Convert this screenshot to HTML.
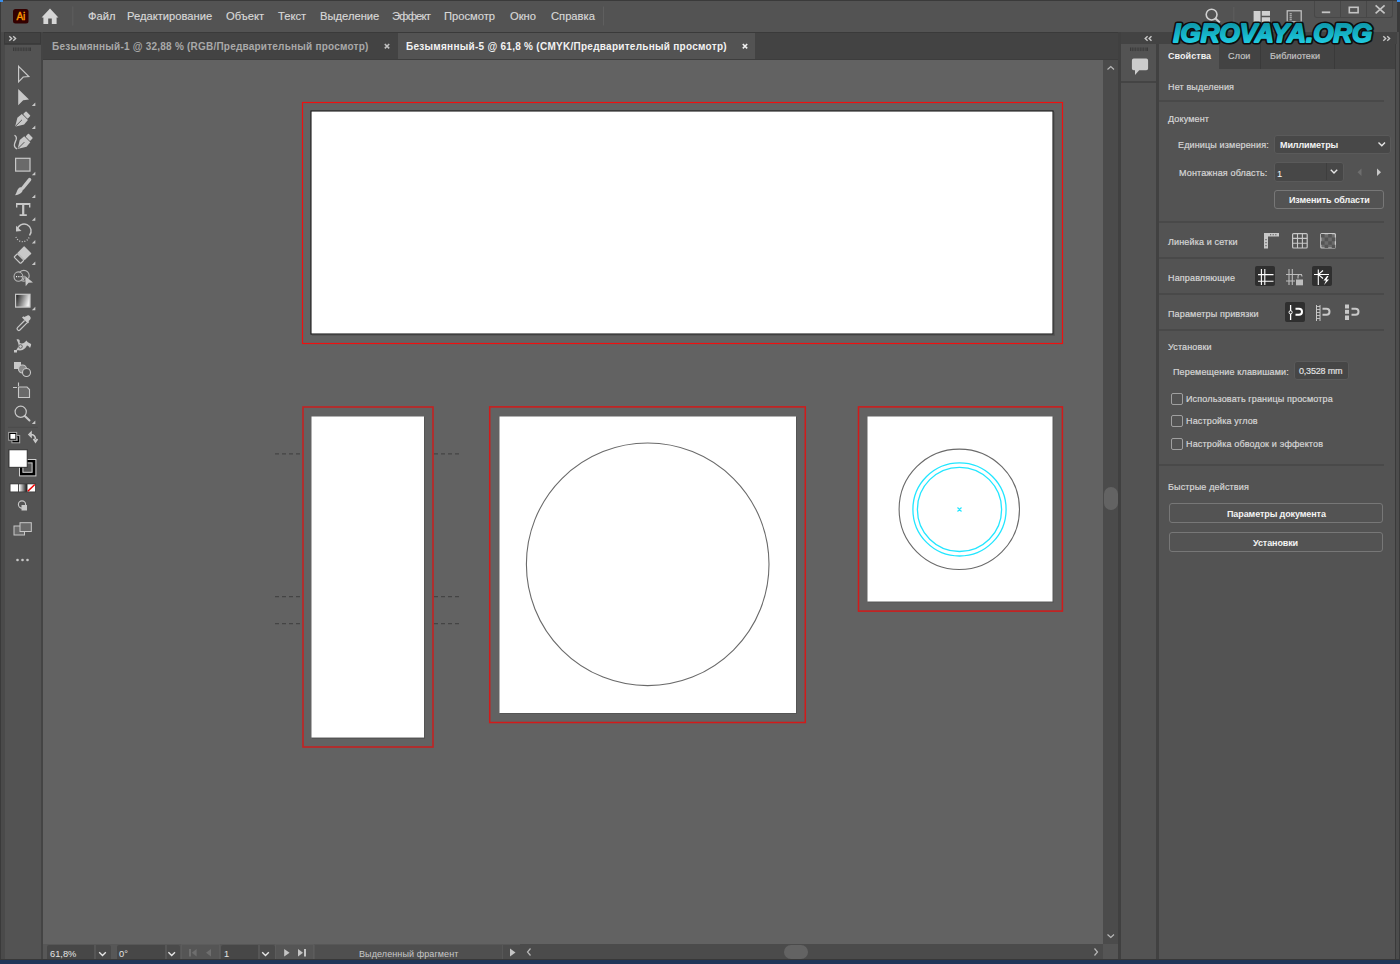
<!DOCTYPE html>
<html><head><meta charset="utf-8">
<style>
*{margin:0;padding:0;box-sizing:border-box}
html,body{width:1400px;height:964px;overflow:hidden;background:#535353;font-family:"Liberation Sans",sans-serif;color:#d0d0d0}
.a{position:absolute}
.t{position:absolute;white-space:nowrap;line-height:1}
.m{font-size:11.2px;color:#d8d8d8;top:10.5px;-webkit-text-stroke:0.15px #d8d8d8}
.tab{font-size:10px;top:42px;font-weight:bold;letter-spacing:0.22px}
.p{font-size:9px;letter-spacing:0.15px;color:#d6d6d6;-webkit-text-stroke:0.2px #d6d6d6}
.b{font-size:9px;font-weight:bold;color:#f4f4f4;letter-spacing:-0.1px}
.sep{position:absolute;left:1159px;width:225px;height:2px;background:#494949}
.btn{position:absolute;border:1px solid #777;border-radius:3px}
.cb{position:absolute;left:1171px;width:12px;height:12px;border:1px solid #a0a0a0;border-radius:2px}
svg{position:absolute;overflow:visible}
</style></head><body>
<!-- window frame -->
<div class="a" style="left:0;top:0;width:1400px;height:964px;background:#3a3a3a"></div>
<div class="a" style="left:1px;top:1px;width:1396px;height:31px;background:#535353"></div>
<div class="a" style="left:0;top:0;width:3px;height:2px;background:#3b8eea"></div>
<div class="a" style="left:1397px;top:0;width:3px;height:2px;background:#3b8eea"></div>
<div class="a" style="left:1396px;top:32px;width:3px;height:927px;background:#4c4c4c"></div>
<!-- tab bar -->
<div class="a" style="left:43px;top:32px;width:1075px;height:28px;background:#434343"></div>
<div class="a" style="left:43px;top:32px;width:1075px;height:1px;background:#3a3a3a"></div>
<div class="a" style="left:398px;top:33px;width:357px;height:26px;background:#535353"></div>
<div class="a" style="left:43px;top:59px;width:1075px;height:1px;background:#3d3d3d"></div>
<!-- canvas -->
<div class="a" style="left:43px;top:60px;width:1060px;height:884px;background:#626262"></div>
<!-- left toolbar -->
<div class="a" style="left:1px;top:32px;width:42px;height:927px;background:#4a4a4a"></div>
<div class="a" style="left:5px;top:32px;width:36px;height:927px;background:#535353"></div>
<div class="a" style="left:4px;top:32px;width:37px;height:12px;background:#424242;border:1px solid #3a3a3a"></div>
<div class="a" style="left:4px;top:44px;width:37px;height:1px;background:#3e3e3e"></div>
<div class="a" style="left:41px;top:32px;width:2px;height:927px;background:#444"></div>
<!-- vertical scrollbar -->
<div class="a" style="left:1103px;top:60px;width:15px;height:884px;background:#4b4b4b"></div>
<div class="a" style="left:1104px;top:487px;width:14px;height:23px;border-radius:7px;background:#636363"></div>
<div class="a" style="left:1118px;top:32px;width:3px;height:927px;background:#404040"></div>
<!-- bottom status -->
<div class="a" style="left:43px;top:944px;width:1060px;height:15px;background:#4b4b4b"></div>
<div class="a" style="left:43px;top:944px;width:477px;height:15px;background:#575757"></div>
<div class="a" style="left:47px;top:945px;width:47px;height:14px;background:#474747;border-radius:2px 0 0 0"></div>
<div class="a" style="left:94px;top:945px;width:1.5px;height:14px;background:#565656"></div>
<div class="a" style="left:95.5px;top:945px;width:15px;height:14px;background:#4a4a4a;border-radius:0 2px 0 0"></div>
<div class="a" style="left:117px;top:945px;width:48px;height:14px;background:#474747;border-radius:2px 0 0 0"></div>
<div class="a" style="left:165px;top:945px;width:1.5px;height:14px;background:#565656"></div>
<div class="a" style="left:166.5px;top:945px;width:13.5px;height:14px;background:#4a4a4a;border-radius:0 2px 0 0"></div>
<div class="a" style="left:180.5px;top:944.3px;width:39px;height:14.7px;background:#555;border:1px solid #5c5c5c;border-bottom:none"></div>
<div class="a" style="left:220.5px;top:945px;width:37.5px;height:14px;background:#474747;border-radius:2px 0 0 0"></div>
<div class="a" style="left:258px;top:945px;width:1.5px;height:14px;background:#565656"></div>
<div class="a" style="left:259.5px;top:945px;width:15.5px;height:14px;background:#4a4a4a;border-radius:0 2px 0 0"></div>
<div class="a" style="left:275.3px;top:944.3px;width:39px;height:14.7px;background:#555;border:1px solid #5c5c5c;border-bottom:none"></div>
<div class="a" style="left:315px;top:944.5px;width:187px;height:14.5px;background:#4f4f4f"></div>
<div class="a" style="left:503px;top:944.5px;width:17px;height:14.5px;background:#4c4c4c"></div>
<div class="a" style="left:1103px;top:944px;width:15px;height:15px;background:#555"></div>
<div class="a" style="left:784px;top:945px;width:24px;height:14px;border-radius:7px;background:#636363"></div>
<div class="a" style="left:0;top:959px;width:1400px;height:1px;background:#383838"></div>
<div class="a" style="left:0;top:960px;width:1400px;height:4px;background:#203558"></div>
<!-- right dock -->
<div class="a" style="left:1121px;top:32px;width:276px;height:12px;background:#434343"></div>
<div class="a" style="left:1121px;top:44px;width:35px;height:915px;background:#535353"></div>
<div class="a" style="left:1121px;top:81px;width:35px;height:2px;background:#444"></div>
<div class="a" style="left:1156px;top:44px;width:3px;height:915px;background:#414141"></div>
<div class="a" style="left:1159px;top:44px;width:236px;height:915px;background:#535353"></div>
<div class="a" style="left:1219px;top:44px;width:176px;height:25px;background:#434343"></div>
<div class="a" style="left:1260px;top:44px;width:1px;height:25px;background:#3a3a3a"></div>
<div class="a" style="left:1334px;top:44px;width:1px;height:25px;background:#3a3a3a"></div>
<!-- separators in properties -->
<div class="sep" style="top:100px"></div>
<div class="sep" style="top:221px"></div>
<div class="sep" style="top:257px"></div>
<div class="sep" style="top:293px"></div>
<div class="sep" style="top:329px"></div>
<div class="sep" style="top:464px"></div>
<!-- window buttons -->
<div class="a" style="left:1314px;top:1px;width:79px;height:17px;border:1px solid #474747;border-top:none;border-radius:0 0 3px 3px;background:#535353"></div>
<div class="a" style="left:1340px;top:1px;width:1px;height:16px;background:#474747"></div>
<div class="a" style="left:1366px;top:1px;width:1px;height:16px;background:#474747"></div>
<!-- properties controls -->
<div class="a" style="left:1274px;top:135px;width:117px;height:19px;background:#484848;border:1px solid #5a5a5a;border-radius:3px"></div>
<div class="a" style="left:1274px;top:162px;width:70px;height:20px;background:#474747;border:1px solid #5a5a5a;border-radius:3px"></div>
<div class="a" style="left:1326px;top:163px;width:1px;height:17px;background:#3e3e3e"></div>
<div class="btn" style="left:1274px;top:190px;width:110px;height:19px"></div>
<div class="a" style="left:1294px;top:361px;width:55px;height:19px;background:#464646;border:1px solid #5a5a5a;border-radius:3px"></div>
<div class="cb" style="top:393px"></div>
<div class="cb" style="top:415px"></div>
<div class="cb" style="top:438px"></div>
<div class="btn" style="left:1169px;top:503px;width:214px;height:20px"></div>
<div class="btn" style="left:1169px;top:532px;width:214px;height:20px"></div>
<!-- dark icon backgrounds -->
<div class="a" style="left:1255px;top:266px;width:20px;height:20px;background:#2f2f2f;border-radius:2px"></div>
<div class="a" style="left:1312px;top:266px;width:20px;height:20px;background:#2f2f2f;border-radius:2px"></div>
<div class="a" style="left:1285px;top:302px;width:20px;height:20px;background:#2f2f2f;border-radius:2px"></div>
<svg style="left:0;top:0" width="1400" height="964">
<defs>
  <linearGradient id="wg" x1="0" y1="0" x2="0" y2="1">
    <stop offset="0" stop-color="#0b8c9e"/><stop offset="0.55" stop-color="#16b4c8"/><stop offset="1" stop-color="#27d8ee"/>
  </linearGradient>
  <linearGradient id="gr" x1="0" y1="0" x2="1" y2="0.3">
    <stop offset="0" stop-color="#111"/><stop offset="1" stop-color="#eee"/>
  </linearGradient>
  <linearGradient id="gr2" x1="0" y1="0" x2="1" y2="0">
    <stop offset="0" stop-color="#fff"/><stop offset="1" stop-color="#222"/>
  </linearGradient>
  <g id="nib">
    <rect x="-3.2" y="-9.5" width="6.4" height="4.2" rx="0.8"/>
    <path d="M-4.3 -4.6H4.3L4.8 1.2L0.4 8.4H-0.4L-4.8 1.2Z"/>
  </g>
  <path id="tri" d="M3.5 0V3.5H0Z"/>
</defs>
<!-- CANVAS ARTWORK -->
  <rect x="311" y="111" width="742" height="223" fill="#fff" stroke="#1a1a1a" stroke-width="1.1"/>
  <path d="M312 335H1054.5M1054 112V335.5" stroke="#4a4a4a" stroke-width="0.8"/>
  <rect x="302.5" y="102.5" width="760" height="241" fill="none" stroke="#ee1010" stroke-width="1.2"/>
  <path d="M312 738.5H425M424.5 417V739" stroke="#555" stroke-width="1"/>
  <rect x="311.5" y="416.5" width="112.5" height="321" fill="#fff"/>
  <rect x="303" y="407" width="130" height="340" fill="none" stroke="#c42222" stroke-width="1.6"/>
  <path d="M500 713.5H797M796.5 417V714" stroke="#555" stroke-width="1"/>
  <rect x="499.5" y="416.5" width="296.5" height="296.5" fill="#fff"/>
  <rect x="489.7" y="406.9" width="315.6" height="315.6" fill="none" stroke="#d21a1a" stroke-width="1.5"/>
  <path d="M868 602H1053.5M1053 417V602.5" stroke="#555" stroke-width="1"/>
  <rect x="867.5" y="416.5" width="185" height="185" fill="#fff"/>
  <rect x="858.5" y="406.9" width="203.9" height="204.2" fill="none" stroke="#d21a1a" stroke-width="1.5"/>
  <circle cx="647.7" cy="564.3" r="121.3" fill="none" stroke="#6a6a6a" stroke-width="1.1"/>
  <circle cx="959.3" cy="509.3" r="60.2" fill="none" stroke="#6a6a6a" stroke-width="1.1"/>
  <circle cx="959.5" cy="509.4" r="46.6" fill="none" stroke="#22e6ff" stroke-width="1.3"/>
  <circle cx="959.5" cy="509.4" r="42.1" fill="none" stroke="#22e6ff" stroke-width="1.3"/>
  <path d="M957.5 507.5l4 4M961.5 507.5l-4 4" stroke="#22e6ff" stroke-width="1.2"/>
  <g stroke="#444" stroke-width="1.2" stroke-dasharray="4 3">
    <path d="M275 453.8H302M275 596.7H302M275 623.6H302"/>
    <path d="M434 453.8H461M434 596.7H461M434 623.6H461"/>
  </g>
<!-- MENUBAR ICONS -->
  <rect x="13" y="9" width="15.5" height="14.5" rx="2.5" fill="#330000"/>
  <text x="20.8" y="20.3" font-family="Liberation Sans" font-size="10" fill="#ff9a00" text-anchor="middle" letter-spacing="-0.2" stroke="#ff9a00" stroke-width="0.35">Ai</text>
  <path d="M50 8.6L41.6 17.4H43.4V24H48.2V18.6H51.8V24H56.6V17.4H58.4Z" fill="#d6d6d6"/>
  <rect x="72.3" y="6.5" width="1" height="19" fill="#5f5f5f"/>
  <rect x="603" y="6.5" width="1" height="19" fill="#5f5f5f"/>
  <circle cx="1211.6" cy="14.6" r="5.4" fill="none" stroke="#d0d0d0" stroke-width="1.6"/>
  <path d="M1215.5 18.6L1219.8 22.6" stroke="#d0d0d0" stroke-width="2"/>
  <rect x="1233.3" y="7" width="1" height="15" fill="#5f5f5f"/>
  <path d="M1253.6 11H1260.5V22H1253.6ZM1261.8 11H1270V15.8H1261.8ZM1261.8 17.2H1270V22H1261.8Z" fill="#d0d0d0"/>
  <rect x="1287.2" y="10.8" width="14" height="11" fill="none" stroke="#c8c8c8" stroke-width="1.2"/>
  <path d="M1289.6 13.8h2.2M1289.6 15.8h2.2M1289.6 17.8h2.2M1289.6 19.8h2.2" stroke="#c8c8c8" stroke-width="1"/>
  <path d="M1321.8 12.3H1330.2" stroke="#c4c4c4" stroke-width="1.8"/>
  <rect x="1349.3" y="7.3" width="8.8" height="5.4" fill="none" stroke="#c4c4c4" stroke-width="1.6"/>
  <path d="M1375.6 5.4L1384.6 13.4M1384.6 5.4L1375.6 13.4" stroke="#c4c4c4" stroke-width="1.7"/>
  <!-- tab close -->
  <path d="M384.8 44l4.4 4.4M389.2 44l-4.4 4.4" stroke="#c0c0c0" stroke-width="1.6"/>
  <path d="M742.8 44l4.4 4.4M747.2 44l-4.4 4.4" stroke="#f0f0f0" stroke-width="1.6"/>
<!-- DOCK HEADERS -->
  <path d="M9.3 36.2l2.4 2.3-2.4 2.3M13.2 36.2l2.4 2.3-2.4 2.3" fill="none" stroke="#c8c8c8" stroke-width="1.4"/>
  <g fill="#3a3a3a"><rect x="13" y="47.5" width="18" height="3.5"/></g>
  <g stroke="#535353" stroke-width="0.8"><path d="M14.6 47v5M16.2 47v5M17.8 47v5M19.4 47v5M21 47v5M22.6 47v5M24.2 47v5M25.8 47v5M27.4 47v5M29 47v5"/></g>
  <path d="M1147.6 36.2l-2.4 2.3 2.4 2.3M1151.5 36.2l-2.4 2.3 2.4 2.3" fill="none" stroke="#c8c8c8" stroke-width="1.4"/>
  <path d="M1383.3 36.2l2.4 2.3-2.4 2.3M1387.2 36.2l2.4 2.3-2.4 2.3" fill="none" stroke="#c8c8c8" stroke-width="1.4"/>
  <rect x="1130" y="47.5" width="18" height="3.5" fill="#3a3a3a"/>
  <g stroke="#535353" stroke-width="0.8"><path d="M1131.6 47v5M1133.2 47v5M1134.8 47v5M1136.4 47v5M1138 47v5M1139.6 47v5M1141.2 47v5M1142.8 47v5M1144.4 47v5M1146 47v5"/></g>
  <path d="M1133.7 58.6H1146.3A1.8 1.8 0 0 1 1148.1 60.4V68.4A1.8 1.8 0 0 1 1146.3 70.2H1139.2L1135 75V70.2H1133.7A1.8 1.8 0 0 1 1131.9 68.4V60.4A1.8 1.8 0 0 1 1133.7 58.6Z" fill="#cccccc"/>
<!-- LEFT TOOLBAR ICONS -->
<g fill="#c8c8c8" stroke="none">
  <path d="M18.6 66.3L28.8 76.6L23.2 77L18.6 81.8Z" fill="none" stroke="#c8c8c8" stroke-width="1.2" stroke-linejoin="miter"/>
  <path d="M18.2 89L29 99.6L23.2 100.2L18.2 105.2Z"/>
  <use href="#tri" x="31.8" y="102.6"/>
  <!-- pen -->
  <g transform="translate(21.6 120.2) rotate(45)"><use href="#nib"/><path d="M0 -0.5V8" stroke="#535353" stroke-width="0.9"/></g>
  <use href="#tri" x="31.8" y="125.6"/>
  <!-- curvature pen -->
  <g transform="translate(24 142.5) rotate(45)"><use href="#nib"/><path d="M0 -0.5V8" stroke="#535353" stroke-width="0.9"/></g>
  <path d="M14.5 135.3C16.5 136.5 16.8 138 16 140C14.5 143.5 12.8 147 17.2 149" fill="none" stroke="#c8c8c8" stroke-width="1.3"/>
  <!-- rectangle -->
  <rect x="15.6" y="158.3" width="14.4" height="12.8" fill="#6a6a6a" stroke="#c8c8c8" stroke-width="1.2"/>
  <use href="#tri" x="31.8" y="171.8"/>
  <!-- brush -->
  <path d="M29.6 179.6L22.6 188.2" stroke="#c8c8c8" stroke-width="3.4" stroke-linecap="round"/>
  <path d="M20.8 187.2C23 188 23.4 190 22 192C20.5 194 17.5 195 15 195.3C16 194 16.3 192.5 17.2 190.5C18.2 188.5 19.3 187 20.8 187.2Z"/>
  <use href="#tri" x="31.8" y="194.6"/>
  <!-- type -->
  <path d="M16 203H30.4V207.4H29V205H24.3V214.3H26.8V216H19.6V214.3H22.1V205H17.4V207.4H16Z"/>
  <use href="#tri" x="31.8" y="217.2"/>
  <!-- rotate -->
  <path d="M17.2 230A7 7 0 1 1 29.5 235.5" fill="none" stroke="#c8c8c8" stroke-width="1.4"/>
  <path d="M16 225.8L16 231.5L21.5 231Z"/>
  <path d="M29 237.5A7 7 0 0 1 16 237" fill="none" stroke="#c8c8c8" stroke-width="1.3" stroke-dasharray="1 1.6"/>
  <use href="#tri" x="31.8" y="240"/>
  <!-- eraser -->
  <g transform="translate(22.3 255.3) rotate(45)"><rect x="-5.2" y="-7.8" width="10.4" height="9.6" rx="0.6"/><rect x="-4.6" y="2.3" width="9.2" height="4.8" rx="0.8" fill="none" stroke="#c8c8c8" stroke-width="1.1"/></g>
  <use href="#tri" x="31.8" y="261.4"/>
  <!-- shape builder -->
  <circle cx="23.8" cy="275.8" r="5.4" fill="none" stroke="#b8b8b8" stroke-width="1.1"/>
  <ellipse cx="18.4" cy="276.6" rx="4.4" ry="4.7" fill="#535353" stroke="#b8b8b8" stroke-width="1.1"/>
  <path d="M24.3 275.8A5.4 5.4 0 0 1 22.6 280.5" fill="none" stroke="#b8b8b8" stroke-width="1.1"/>
  <path d="M16 276.7h1.1M18.3 276.7h1.1M20.6 276.7h1.1" stroke="#f0f0f0" stroke-width="1.2"/>
  <path d="M22.2 276.7H24.6" stroke="#a0a0a0" stroke-width="0.8"/>
  <path d="M25.2 276L33 282.4L28.6 282.8L25.7 286.2Z" stroke="#535353" stroke-width="0.7" paint-order="stroke"/>
  <!-- gradient -->
  <rect x="15.6" y="294.3" width="14.4" height="12.8" fill="url(#gr)" stroke="#c8c8c8" stroke-width="1.2"/>
  <use href="#tri" x="31.8" y="306.8"/>
  <!-- eyedropper -->
  <path d="M26.5 316A2.6 2.6 0 0 1 30.2 319.6L28.5 321.3L29.2 322L27.8 323.4L22 317.6L23.4 316.2L24.1 316.9Z"/>
  <path d="M24.6 320.5L17.5 327.6A1.7 1.7 0 0 0 19.9 330L27 322.9" fill="none" stroke="#c8c8c8" stroke-width="1.2"/>
  <!-- puppet warp -->
  <path d="M16.5 339.5C19 338.5 20.5 340 19.5 342.5C21 344 23 343.5 24.5 342.5L26.5 340.5L27.5 342C28.5 343 30 343 31 344C31.5 345 30.5 346.5 30 348C29 346.5 28 345.5 27 345.5C26 347 25 349 22.5 350C20.5 350.8 17.5 350 16 350.5C17 349 18 347.5 18.5 346C19 344 17.5 341.5 16.5 339.5Z"/>
  <circle cx="20.5" cy="346.5" r="1.8" fill="none" stroke="#535353" stroke-width="0.8"/>
  <rect x="14" y="350" width="3" height="2.5"/>
  <!-- live paint -->
  <rect x="14" y="362" width="7" height="7"/>
  <circle cx="22.5" cy="369" r="4" fill="#8a8a8a" stroke="#c8c8c8" stroke-width="1.1"/>
  <circle cx="26.5" cy="372.5" r="4" fill="#535353" stroke="#c8c8c8" stroke-width="1.1"/>
  <!-- artboard -->
  <path d="M18.5 387H27L29.5 389.5V397.5H18.5Z" fill="#6a6a6a" stroke="#c8c8c8" stroke-width="1.1"/>
  <path d="M13 387.5H17M18.5 382.5V386" stroke="#c8c8c8" stroke-width="1.1"/>
  <!-- zoom -->
  <circle cx="20.7" cy="411.8" r="5.6" fill="none" stroke="#c8c8c8" stroke-width="1.2"/>
  <path d="M24.8 416L29.5 420.5" stroke="#c8c8c8" stroke-width="2" stroke-linecap="round"/>
  <use href="#tri" x="31.8" y="420.5"/>
  <rect x="8" y="426.8" width="30" height="1" fill="#4b4b4b"/>
  <!-- default fill stroke -->
  <rect x="11.9" y="435.6" width="7.8" height="7.2" fill="#000" stroke="#aaa" stroke-width="1"/>
  <rect x="14.3" y="437.6" width="3" height="3" fill="none" stroke="#888" stroke-width="0.8"/>
  <rect x="8.7" y="432.4" width="8" height="7.8" fill="#000" stroke="#aaa" stroke-width="1"/>
  <rect x="10.4" y="434" width="5" height="4.8" fill="#fff"/>
  <path d="M29 434.5L31 432.5L31 436.5ZM30.5 434.5C33.5 434.5 35.5 436 35.5 439.5M33.5 439L35.5 442L37.5 439" fill="none" stroke="#c8c8c8" stroke-width="1.6"/>
  <!-- big fill stroke -->
  <rect x="19.5" y="459.5" width="16.4" height="16.4" fill="#000" stroke="#d0d0d0" stroke-width="1"/>
  <rect x="22.9" y="462.9" width="9.2" height="9.4" fill="#555" stroke="#d0d0d0" stroke-width="1"/>
  <rect x="9" y="449.8" width="18.2" height="17.5" fill="#fff" stroke="#2a2a2a" stroke-width="0.9"/>
  <!-- color modes -->
  <rect x="9.7" y="483.5" width="26.2" height="8.8" fill="#3a3a3a"/>
  <rect x="10.5" y="484.3" width="7.6" height="7.2" fill="#fff"/>
  <rect x="19" y="484.3" width="7.6" height="7.2" fill="url(#gr2)"/>
  <rect x="27.5" y="484.3" width="7.6" height="7.2" fill="#fff"/>
  <path d="M27.8 491.3L34.8 484.5" stroke="#e00" stroke-width="1.5"/>
  <!-- draw mode -->
  <circle cx="22" cy="504.5" r="3.6" fill="none" stroke="#c8c8c8" stroke-width="1.1"/>
  <rect x="21.5" y="505" width="5.5" height="5.5" fill="#c8c8c8"/>
  <!-- screen mode -->
  <rect x="14" y="526" width="10.5" height="9" fill="#6a6a6a" stroke="#c8c8c8" stroke-width="1"/>
  <rect x="20" y="522.7" width="11.3" height="8.8" fill="#6a6a6a" stroke="#c8c8c8" stroke-width="1"/>
  <circle cx="17.5" cy="560" r="1.3"/><circle cx="22.5" cy="560" r="1.3"/><circle cx="27.5" cy="560" r="1.3"/>
</g>
<!-- RIGHT PANEL ICONS -->
<g fill="#c8c8c8">
  <path d="M1264 233H1279V236.6H1268V248.5H1264Z"/>
  <path d="M1270 234.8h1.2M1272.6 234.8h1.2M1275.2 234.8h1.2M1266 239h0.01M1266 239v1.2M1266 242v1.2M1266 245v1.2" stroke="#535353" stroke-width="1.1"/>
  <rect x="1292.6" y="233.6" width="14.6" height="14.4" rx="1" fill="none" stroke="#c8c8c8" stroke-width="1.2"/>
  <path d="M1297.5 233.6V248M1302.4 233.6V248M1292.6 238.4H1307.2M1292.6 243.2H1307.2" stroke="#c8c8c8" stroke-width="1.1"/>
  <rect x="1320.8" y="233.6" width="14.6" height="14.4" rx="1" fill="#6c6c6c" stroke="#c8c8c8" stroke-width="1.2"/>
  <path d="M1321 234h3.6v3.6H1321ZM1328.2 234h3.6v3.6h-3.6ZM1324.6 237.6h3.6v3.6h-3.6ZM1331.8 237.6h3.6v3.6h-3.6ZM1321 241.2h3.6v3.6H1321ZM1328.2 241.2h3.6v3.6h-3.6ZM1324.6 244.8h3.6v3.2h-3.6ZM1331.8 244.8h3.6v3.2h-3.6Z" fill="#555"/>
</g>
<g stroke="#ffffff" stroke-width="1.1" fill="none">
  <path d="M1261.4 269V285M1264.8 269V285M1258 274.6H1273.5M1258 281.2H1273.5"/>
  <path d="M1318.3 269.5V285M1314 274.5H1329M1318.8 274.2L1323 270.5M1318.8 274.8L1323 278.5"/>
</g>
<path d="M1327 276L1323.5 280.5H1326L1324 285L1329 279.5H1326.5L1328.5 276Z" fill="#fff"/>
<g stroke="#bdbdbd" stroke-width="1.1" fill="none">
  <path d="M1289 269V285M1292.3 269V285M1286 274.5H1302M1286 281H1295"/>
  <path d="M1298 278.5V276.5A2 2 0 0 1 1302 276.5"/>
</g>
<rect x="1296" y="279.5" width="7" height="5.8" fill="#bdbdbd"/>
<g stroke="#fff" fill="none" stroke-width="1.3">
  <path d="M1290.6 305V320"/>
  <path d="M1295.5 308.8H1299A3 3 0 0 1 1299 314.8H1295.5" stroke-width="2"/>
</g>
<circle cx="1290.6" cy="312.3" r="1.6" fill="#2f2f2f" stroke="#fff" stroke-width="1"/>
<g stroke="#c8c8c8" fill="none">
  <path d="M1316.5 305V321M1320 305V321" stroke-width="1"/>
  <path d="M1316.5 306.5h3.5M1316.5 309.5h3.5M1316.5 312.5h3.5M1316.5 315.5h3.5M1316.5 318.5h3.5" stroke-width="0.9"/>
  <path d="M1322.5 308.8H1326.5A3 3 0 0 1 1326.5 314.8H1322.5" stroke-width="2"/>
  <path d="M1351.5 308.8H1355.5A3 3 0 0 1 1355.5 314.8H1351.5" stroke-width="2"/>
</g>
<g fill="#c8c8c8"><rect x="1345" y="304.5" width="4" height="4"/><rect x="1345" y="309.8" width="4" height="4"/><rect x="1345" y="315.5" width="4" height="4.5"/></g>
<!-- dropdown chevrons etc -->
<g stroke="#e6e6e6" stroke-width="1.4" fill="none">
  <path d="M1378.5 142.6L1381.8 145.8L1385 142.6"/>
  <path d="M1330.8 169.8L1334 173L1337.2 169.8"/>
  <path d="M99.2 952.3L102.5 955.5L105.8 952.3"/>
  <path d="M168.4 952.3L171.7 955.5L175 952.3"/>
  <path d="M262.2 952.3L265.5 955.5L268.8 952.3"/>
</g>
<path d="M1361.5 168.5V176L1357.5 172.2Z" fill="#6e6e6e"/>
<path d="M1377 168.5V176L1381 172.2Z" fill="#c8c8c8"/>
<!-- status bar nav icons -->
<g fill="#6e6e6e"><rect x="189" y="949" width="2" height="7.5"/><path d="M196.6 949V956.5L191.8 952.7Z"/><path d="M211 949V956.5L206 952.7Z"/></g>
<g fill="#c4c4c4"><path d="M284.2 949V956.5L289.6 952.7Z"/><path d="M298 949V956.5L303 952.7Z"/><rect x="304" y="949" width="2" height="7.5"/><path d="M510 948.5V956.5L515.5 952.5Z"/></g>
<g stroke="#b8b8b8" stroke-width="1.2" fill="none">
  <path d="M530.5 948.5L527.5 952L530.5 955.5"/>
  <path d="M1094.5 948.5L1097.5 952L1094.5 955.5"/>
  <path d="M1107.5 934.5L1110.8 937.5L1114 934.5"/>
  <path d="M1107.5 69.5L1110.8 66.5L1114 69.5"/>
</g>
<!-- WATERMARK -->
<g font-family="Liberation Sans" font-weight="bold" font-style="italic" font-size="26" text-anchor="middle">
<text x="1272.8" y="42" textLength="199" lengthAdjust="spacingAndGlyphs" fill="#0d0d0d" stroke="#0d0d0d" stroke-width="5.2" stroke-linejoin="round">IGROVAYA.ORG</text>
<text x="1272.8" y="42" textLength="199" lengthAdjust="spacingAndGlyphs" fill="url(#wg)" stroke="url(#wg)" stroke-width="1.8" stroke-linejoin="round">IGROVAYA.ORG</text>
</g>
</svg>
<!-- MENU TEXT -->
<div class="t m" style="left:88px">Файл</div>
<div class="t m" style="left:127px">Редактирование</div>
<div class="t m" style="left:226px">Объект</div>
<div class="t m" style="left:278px">Текст</div>
<div class="t m" style="left:320px">Выделение</div>
<div class="t m" style="left:392px;letter-spacing:-0.8px">Эффект</div>
<div class="t m" style="left:444px">Просмотр</div>
<div class="t m" style="left:510px">Окно</div>
<div class="t m" style="left:551px">Справка</div>
<!-- TABS TEXT -->
<div class="t tab" style="left:52px;color:#a9a9a9">Безымянный-1 @ 32,88 % (RGB/Предварительный просмотр)</div>
<div class="t tab" style="left:406px;color:#f2f2f2;letter-spacing:0.27px">Безымянный-5 @ 61,8 % (CMYK/Предварительный просмотр)</div>
<!-- PANEL TEXT -->
<div class="t p" style="left:1168px;top:52px;font-weight:bold;color:#f0f0f0;-webkit-text-stroke:0;letter-spacing:0.05px">Свойства</div>
<div class="t p" style="left:1228px;top:51.9px;color:#b8b8b8">Слои</div>
<div class="t p" style="left:1270px;top:51.9px;color:#b8b8b8">Библиотеки</div>
<div class="t p" style="left:1168px;top:82.9px">Нет выделения</div>
<div class="t p" style="left:1168px;top:114.9px">Документ</div>
<div class="t p" style="left:1178px;top:140.9px">Единицы измерения:</div>
<div class="t b" style="left:1280px;top:141px">Миллиметры</div>
<div class="t p" style="left:1179px;top:168.9px">Монтажная область:</div>
<div class="t b" style="left:1277px;top:168.5px;font-weight:normal;font-size:9.5px">1</div>
<div class="t b" style="left:1289px;top:196px">Изменить области</div>
<div class="t p" style="left:1168px;top:237.9px">Линейка и сетки</div>
<div class="t p" style="left:1168px;top:273.9px">Направляющие</div>
<div class="t p" style="left:1168px;top:309.9px">Параметры привязки</div>
<div class="t p" style="left:1168px;top:342.9px">Установки</div>
<div class="t p" style="left:1173px;top:367.9px">Перемещение клавишами:</div>
<div class="t p" style="left:1299px;top:366.9px;font-size:9px;letter-spacing:-0.2px;color:#e8e8e8">0,3528 mm</div>
<div class="t p" style="left:1186px;top:394.9px">Использовать границы просмотра</div>
<div class="t p" style="left:1186px;top:416.9px">Настройка углов</div>
<div class="t p" style="left:1186px;top:439.9px">Настройка обводок и эффектов</div>
<div class="t p" style="left:1168px;top:482.9px">Быстрые действия</div>
<div class="t b" style="left:1227px;top:510px">Параметры документа</div>
<div class="t b" style="left:1253px;top:539px">Установки</div>
<!-- status bar text -->
<div class="t" style="left:50px;top:950.2px;font-size:9.3px;color:#e4e4e4">61,8%</div>
<div class="t" style="left:119px;top:950.2px;font-size:9.3px;color:#e4e4e4">0°</div>
<div class="t" style="left:224px;top:950.2px;font-size:9.3px;color:#e4e4e4">1</div>
<div class="t" style="left:359px;top:950px;font-size:9px;letter-spacing:0.1px;color:#c8c8c8">Выделенный фрагмент</div>
</body></html>
